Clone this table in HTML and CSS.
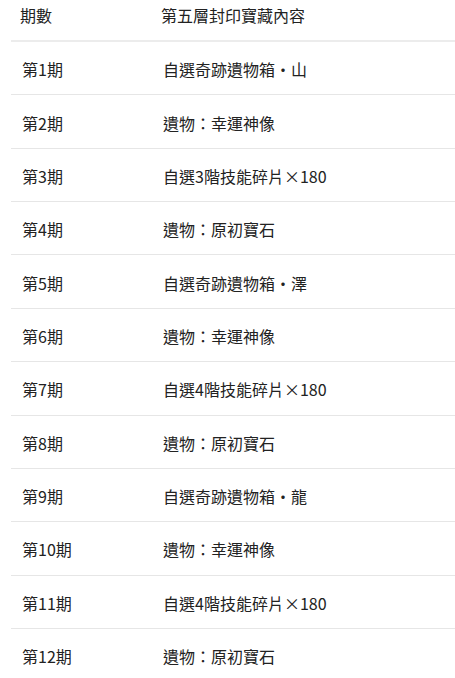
FILE: index.html
```html
<!DOCTYPE html>
<html lang="zh-Hant">
<head>
<meta charset="utf-8">
<link rel="stylesheet" href="styles.css">
</head>
<body>
<div class="table">
  <div class="row head">
    <div class="cell">期數</div>
    <div class="cell">第五層封印寶藏內容</div>
  </div>
  <div class="row"><div class="cell">第1期</div><div class="cell">自選奇跡遺物箱・山</div></div>
  <div class="row"><div class="cell">第2期</div><div class="cell">遺物：幸運神像</div></div>
  <div class="row"><div class="cell">第3期</div><div class="cell">自選3階技能碎片×180</div></div>
  <div class="row"><div class="cell">第4期</div><div class="cell">遺物：原初寶石</div></div>
  <div class="row"><div class="cell">第5期</div><div class="cell">自選奇跡遺物箱・澤</div></div>
  <div class="row"><div class="cell">第6期</div><div class="cell">遺物：幸運神像</div></div>
  <div class="row"><div class="cell">第7期</div><div class="cell">自選4階技能碎片×180</div></div>
  <div class="row"><div class="cell">第8期</div><div class="cell">遺物：原初寶石</div></div>
  <div class="row"><div class="cell">第9期</div><div class="cell">自選奇跡遺物箱・龍</div></div>
  <div class="row"><div class="cell">第10期</div><div class="cell">遺物：幸運神像</div></div>
  <div class="row"><div class="cell">第11期</div><div class="cell">自選4階技能碎片×180</div></div>
  <div class="row"><div class="cell">第12期</div><div class="cell">遺物：原初寶石</div></div>
</div>
</body>
</html>
```
FILE: styles.css
```css
html, body {
  margin: 0;
  padding: 0;
  background: #fff;
}
body {
  font-family: "Noto Sans CJK TC", "Noto Sans", sans-serif;
  font-size: 16px;
  line-height: 24px;
  color: #222;
}
.table {
  margin-left: 11px;
  display: flex;
  flex-direction: column;
}
.row {
  display: grid;
  grid-template-columns: 141px 1fr;
  align-items: center;
  box-sizing: border-box;
  height: 53.36px;
  padding: 2px 0 0 11px;
  border-bottom: 1px solid #e6e6e6;
}
.row.head {
  height: 42px;
  align-items: start;
  padding: 3px 0 0 9px;
  border-bottom: 2px solid #ececec;
}
```
